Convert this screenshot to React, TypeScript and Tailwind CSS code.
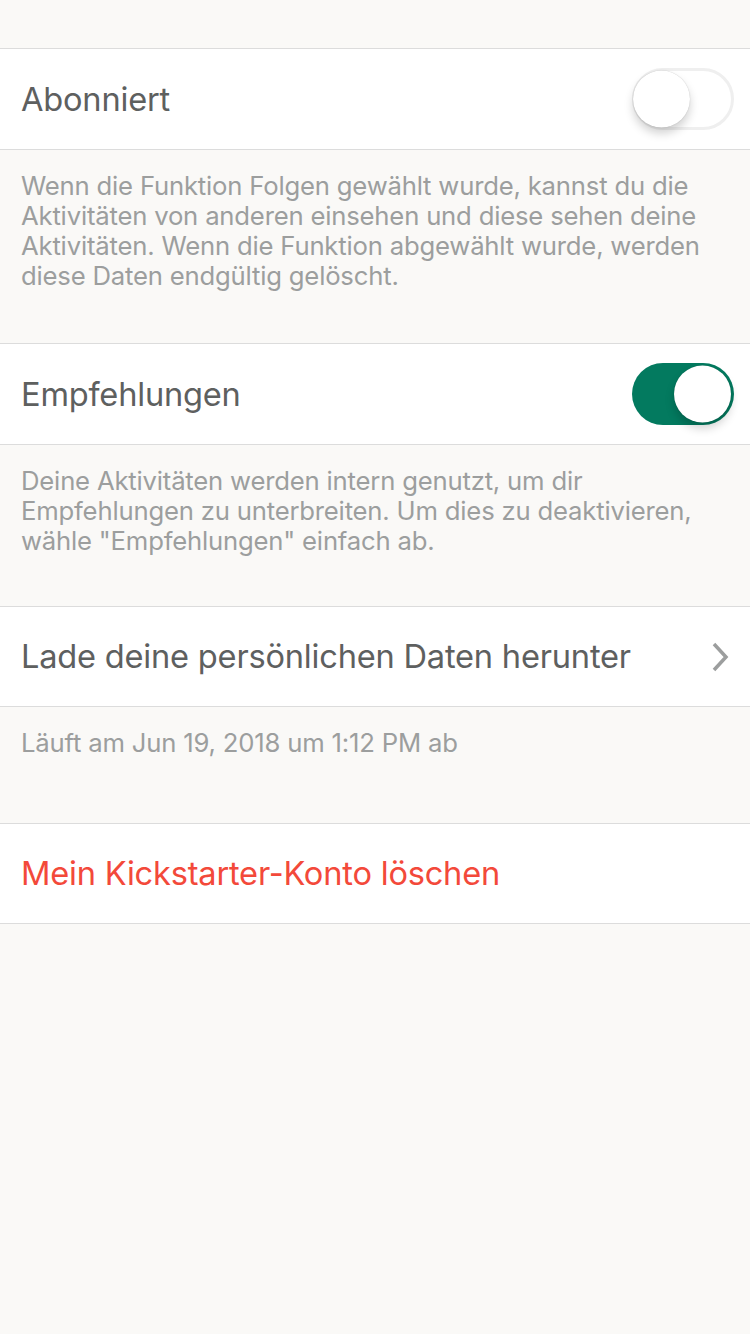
import React, { useState } from 'react';

const Toggle = ({ on, onChange }: { on: boolean; onChange: () => void }) => (
  <button
    onClick={onChange}
    className={`relative w-[102px] h-[62px] rounded-full transition-colors ${
      on ? 'bg-[#037a5f]' : 'bg-white border-[3px] border-[#efefef]'
    }`}
  >
    <span
      className={`absolute top-1/2 -translate-y-1/2 w-[57px] h-[57px] rounded-full bg-white shadow-[0_6px_10px_rgba(0,0,0,0.18),0_0_1px_rgba(0,0,0,0.25)] ${
        on ? 'right-[3px]' : 'left-[-2px]'
      }`}
    />
  </button>
);

const Row = ({ children, h = 'h-[102px]' }: { children: React.ReactNode; h?: string }) => (
  <div className={`${h} bg-white border-y border-[#dcdcdc] flex items-center justify-between pl-[21px] pr-[16px]`}>
    {children}
  </div>
);

const Footer = ({ text, className }: { text: string; className: string }) => (
  <p className={`pl-[21px] pr-[30px] pt-[21px] text-[25.7px] leading-[30px] text-[#9c9e9e] ${className}`}>{text}</p>
);

export default function App() {
  const [subscribed, setSubscribed] = useState(false);
  const [recommend, setRecommend] = useState(true);

  return (
    <div className="min-h-[1334px] w-[750px] bg-[#faf9f7] font-['Inter',sans-serif] tracking-[-0.2px]">
      <div className="h-[48px]" />

      <Row>
        <span className="text-[32.6px] text-[#5e605f]">Abonniert</span>
        <Toggle on={subscribed} onChange={() => setSubscribed(!subscribed)} />
      </Row>
      <Footer
        className="h-[193px]"
        text="Wenn die Funktion Folgen gewählt wurde, kannst du die Aktivitäten von anderen einsehen und diese sehen deine Aktivitäten. Wenn die Funktion abgewählt wurde, werden diese Daten endgültig gelöscht."
      />

      <Row>
        <span className="text-[32.6px] text-[#5e605f]">Empfehlungen</span>
        <Toggle on={recommend} onChange={() => setRecommend(!recommend)} />
      </Row>
      <Footer
        className="h-[161px]"
        text={'Deine Aktivitäten werden intern genutzt, um dir Empfehlungen zu unterbreiten. Um dies zu deaktivieren, wähle "Empfehlungen" einfach ab.'}
      />

      <Row h="h-[101px]">
        <span className="text-[32.6px] text-[#5e605f]">Lade deine persönlichen Daten herunter</span>
        <svg width="18" height="30" viewBox="0 0 18 30" className="mr-[5px]">
          <path d="M3 2 L15 15 L3 28" fill="none" stroke="#9c9e9e" strokeWidth="3.5" />
        </svg>
      </Row>
      <Footer className="h-[116px]" text="Läuft am Jun 19, 2018 um 1:12 PM ab" />

      <Row h="h-[101px]">
        <span className="text-[32.6px] text-[#f3493a]">Mein Kickstarter-Konto löschen</span>
      </Row>
    </div>
  );
}
